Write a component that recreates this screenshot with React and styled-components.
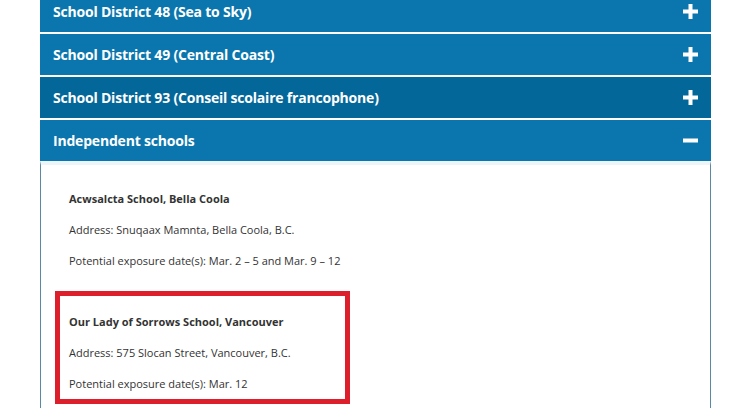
import styled, { createGlobalStyle } from 'styled-components';

const districts = [
  { name: 'School District 48 (Sea to Sky)' },
  { name: 'School District 49 (Central Coast)' },
  { name: 'School District 93 (Conseil scolaire francophone)', active: true },
];

const schools = [
  {
    name: 'Acwsalcta School, Bella Coola',
    address: 'Snuqaax Mamnta, Bella Coola, B.C.',
    dates: 'Mar. 2 – 5 and Mar. 9 – 12',
  },
  {
    name: 'Our Lady of Sorrows School, Vancouver',
    address: '575 Slocan Street, Vancouver, B.C.',
    dates: 'Mar. 12',
    highlight: true,
  },
];

const PlusIcon = () => (
  <svg width="15" height="15" viewBox="0 0 15 15">
    <rect x="0" y="5.5" width="15" height="4" fill="#fff" />
    <rect x="5.5" y="0" width="4" height="15" fill="#fff" />
  </svg>
);

const MinusIcon = () => (
  <svg width="15" height="15" viewBox="0 0 15 15">
    <rect x="0" y="5.5" width="15" height="4" fill="#fff" />
  </svg>
);

const App = () => {
  return (
    <>
      <GlobalStyle />
      <Accordion>
        {districts.map((d) => (
          <Header key={d.name} $active={d.active}>
            <HeaderTitle>{d.name}</HeaderTitle>
            <PlusIcon />
          </Header>
        ))}
        <Header>
          <HeaderTitle>Independent schools</HeaderTitle>
          <MinusIcon />
        </Header>
        <Panel>
          {schools.map((s) => (
            <Entry key={s.name} $highlight={s.highlight}>
              <SchoolName>{s.name}</SchoolName>
              <Line>Address: {s.address}</Line>
              <Line>Potential exposure date(s): {s.dates}</Line>
            </Entry>
          ))}
        </Panel>
      </Accordion>
    </>
  );
};

const GlobalStyle = createGlobalStyle`
  body {
    margin: 0;
    background: #fff;
    font-family: 'Open Sans', 'Liberation Sans', sans-serif;
    overflow: hidden;
  }
`;

const Accordion = styled.div`
  width: 671px;
  margin: -9px 0 0 40px;
  display: flex;
  flex-direction: column;
  gap: 2px;
`;

const Header = styled.div`
  height: 41px;
  display: flex;
  align-items: center;
  justify-content: space-between;
  padding: 0 13px 0 13px;
  box-sizing: border-box;
  background: ${({ $active }) => ($active ? '#03679a' : '#0a76ad')};
  color: #fff;
`;

const HeaderTitle = styled.span`
  font-family: 'Open Sans', sans-serif;
  font-weight: 700;
  font-size: 14px;
  letter-spacing: -0.2px;
`;

const Panel = styled.div`
  margin-top: -2px;
  border: 1px solid #5a8aa3;
  border-top: 4px solid #eef5f9;
  border-bottom: none;
  padding: 3px 0 20px 14px;
  display: flex;
  flex-direction: column;
  gap: 10px;
  color: #333;
`;

const Entry = styled.div`
  width: 295px;
  box-sizing: border-box;
  border: 5px solid ${({ $highlight }) => ($highlight ? '#dc1f2b' : 'transparent')};
  padding: 10px 0 0 9px;
`;

const Line = styled.p`
  margin: 0;
  font-size: 11px;
  line-height: 31px;
  white-space: nowrap;
`;

const SchoolName = styled(Line)`
  font-weight: 700;
`;

export default App;
